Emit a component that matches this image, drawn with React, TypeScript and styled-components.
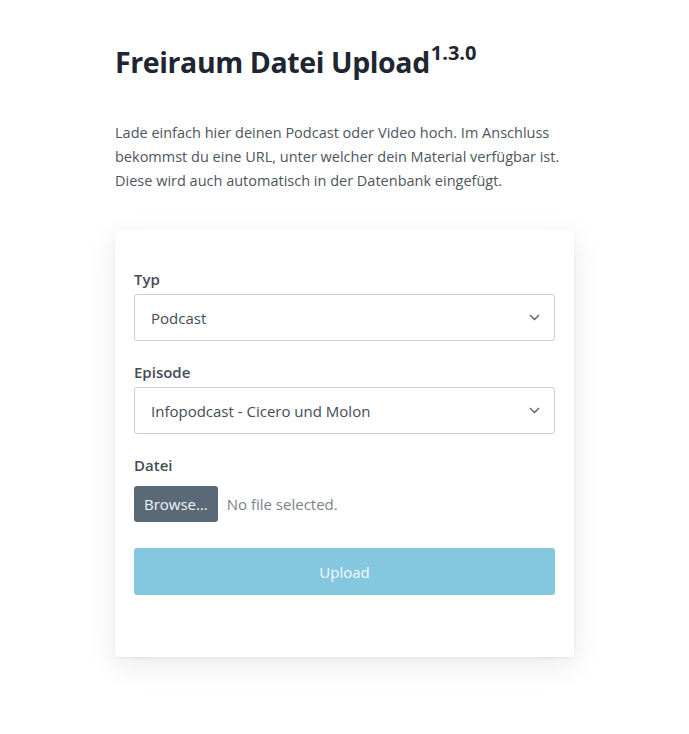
import React from "react";
import styled, { createGlobalStyle } from "styled-components";

const Global = createGlobalStyle`
  html, body { margin: 0; padding: 0; background: #ffffff; }
  body { font-family: "Open Sans", "Noto Sans", sans-serif; color: #343a40; }
  * { box-sizing: border-box; }
`;

const Page = styled.main`
  width: 459px;
  margin: 0 auto;
  padding-top: 40px;
  padding-bottom: 60px;
`;

const Title = styled.h1`
  margin: 0;
  font-size: 28.5px;
  font-weight: 700;
  line-height: 44px;
  color: #1e2631;
  letter-spacing: -0.4px;
`;

const Version = styled.sup`
  font-size: 20px;
  font-weight: 700;
  vertical-align: 0;
  position: relative;
  top: -13px;
  margin-left: 1px;
  letter-spacing: 0;
`;

const Intro = styled.p`
  margin: 33px 0 37px;
  font-size: 14.5px;
  line-height: 24px;
  color: #4d5560;
`;

const Card = styled.section`
  background: #fff;
  border-radius: 3px;
  box-shadow: 0 8px 30px rgba(0, 0, 0, 0.09), 0 1px 3px rgba(0, 0, 0, 0.06);
  padding: 38px 19px 62px;
  display: flex;
  flex-direction: column;
`;

const Field = styled.div`
  display: flex;
  flex-direction: column;
  margin-bottom: 20px;
`;

const Label = styled.label`
  font-size: 15px;
  font-weight: 600;
  color: #444c56;
  line-height: 22px;
  margin-bottom: 4px;
`;

const SelectBox = styled.div`
  height: 47px;
  border: 1px solid #c7ccd1;
  border-radius: 3px;
  display: flex;
  align-items: center;
  justify-content: space-between;
  padding: 0 14px 0 16px;
  font-size: 15px;
  color: #444c56;
  background: #fff;
`;

const FileRow = styled.div`
  display: flex;
  align-items: center;
  gap: 9px;
  margin-top: 6px;
`;

const BrowseButton = styled.button`
  height: 36px;
  padding: 0 10px;
  background: #5a6977;
  color: #f2f4f6;
  border: none;
  border-radius: 3px;
  font-family: inherit;
  font-size: 15px;
`;

const FileText = styled.span`
  font-size: 15px;
  color: #7a828b;
`;

const UploadButton = styled.button`
  margin-top: 6px;
  height: 47px;
  width: 100%;
  background: #86c7e0;
  color: #f4fbfd;
  border: none;
  border-radius: 3px;
  font-family: inherit;
  font-size: 15px;
`;

const Chevron = () => (
  <svg width="11" height="7" viewBox="0 0 11 7" fill="none">
    <path d="M1 1l4.5 4.5L10 1" stroke="#555d66" strokeWidth="1.3" />
  </svg>
);

export default function App() {
  return (
    <>
      <Global />
      <Page>
        <Title>
          Freiraum Datei Upload<Version>1.3.0</Version>
        </Title>
        <Intro>
          Lade einfach hier deinen Podcast oder Video hoch. Im Anschluss bekommst du eine URL,
          unter welcher dein Material verfügbar ist. Diese wird auch automatisch in der Datenbank
          eingefügt.
        </Intro>
        <Card>
          <Field>
            <Label>Typ</Label>
            <SelectBox>
              <span>Podcast</span>
              <Chevron />
            </SelectBox>
          </Field>
          <Field>
            <Label>Episode</Label>
            <SelectBox>
              <span>Infopodcast - Cicero und Molon</span>
              <Chevron />
            </SelectBox>
          </Field>
          <Field>
            <Label>Datei</Label>
            <FileRow>
              <BrowseButton>Browse…</BrowseButton>
              <FileText>No file selected.</FileText>
            </FileRow>
          </Field>
          <UploadButton disabled>Upload</UploadButton>
        </Card>
      </Page>
    </>
  );
}
